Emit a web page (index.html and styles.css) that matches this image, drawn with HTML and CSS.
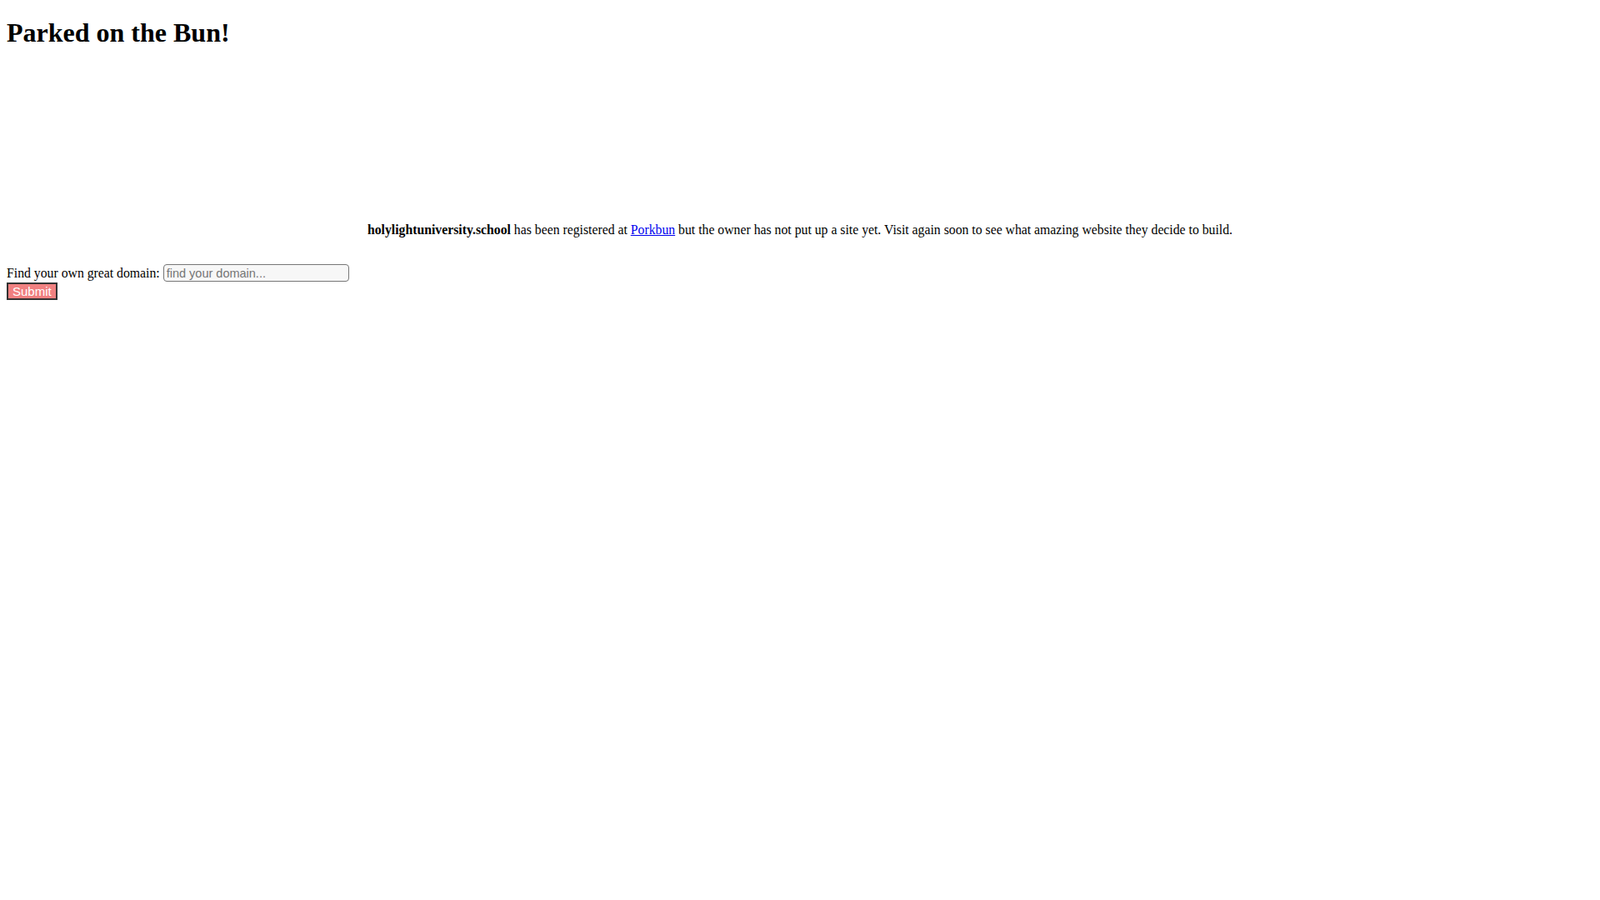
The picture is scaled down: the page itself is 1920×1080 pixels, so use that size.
FILE: index.html
```html
<!DOCTYPE html>
<html lang="en">
<head>
<meta charset="utf-8">
<title>Parked on the Bun!</title>
<link rel="stylesheet" href="styles.css">
</head>
<body>
<h1 class="title">Parked on the Bun!</h1>
<div class="hero">
  <div class="logo-space"></div>
  <p class="notice"><b>holylightuniversity.school</b> has been registered at <a href="#">Porkbun</a> but the owner has not put up a site yet. Visit again soon to see what amazing website they decide to build.</p>
</div>
<form class="finder">
  <label class="finder-label">Find your own great domain: <input class="finder-input" type="text" placeholder="find your domain..."></label>
  <button class="finder-btn" type="button">Submit</button>
</form>
</body>
</html>
```
FILE: styles.css
```css
html, body {
  background: #fff;
}
body {
  margin: 8px;
  font-family: "Liberation Serif", "Times New Roman", serif;
  font-size: 15.75px;
  color: #000;
}
.title {
  font-size: 32px;
  font-weight: bold;
  margin: 13px 0 21.44px 0;
}
.hero {
  text-align: center;
}
.logo-space {
  height: 172px;
}
.notice {
  margin: 16px 0;
}
.notice a {
  color: #0000ee;
  text-decoration: underline;
}
.finder {
  margin: 32px 0 0 0;
}
.finder-input {
  font-family: "Liberation Sans", Arial, sans-serif;
  font-size: 14.5px;
  width: 223px;
  height: 21px;
  box-sizing: border-box;
  padding: 1px 3px;
  border: 1px solid #767676;
  border-radius: 4px;
  background: #f7f7f7;
  color: #000;
  margin: 0;
  vertical-align: baseline;
}
.finder-input::placeholder {
  color: #757575;
}
.finder-btn {
  display: block;
  margin: 1px 0 0 0;
  font-family: "Liberation Sans", Arial, sans-serif;
  font-size: 15px;
  color: #fff;
  background: #f08080;
  border: 2px solid #333;
  padding: 1px 5px;
  height: 21px;
  line-height: 15px;
  border-radius: 0;
}
```
